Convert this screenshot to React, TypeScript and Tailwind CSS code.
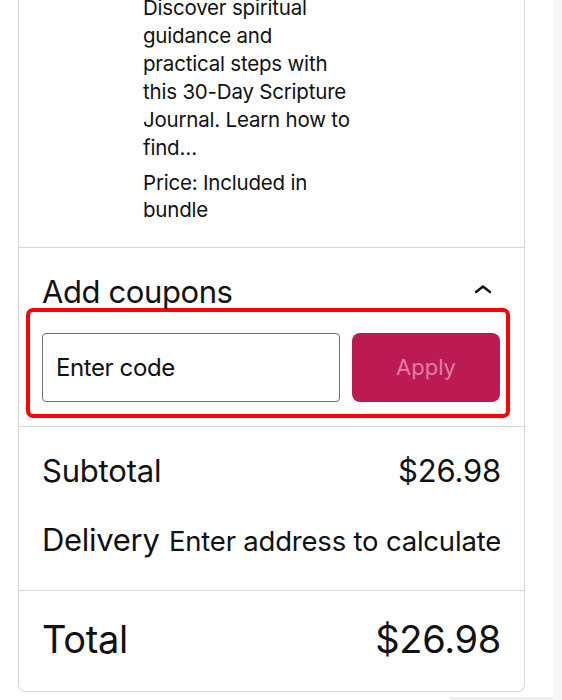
import React from 'react';

const font = { fontFamily: 'Inter, "Noto Sans", sans-serif' };

const descLines = [
  'Discover spiritual',
  'guidance and',
  'practical steps with',
  'this 30-Day Scripture',
  'Journal. Learn how to',
  'find…',
];

const App: React.FC = () => {
  return (
    <div className="w-[562px] h-[700px] bg-white overflow-hidden flex text-[#111]" style={font}>
      <div className="w-[553px] shrink-0">
        {/* Cart summary card */}
        <div className="ml-[18px] w-[507px] -mt-[6px] border-x border-b border-[#d6d6d6] rounded-b-[7px]">
          {/* Item description */}
          <div className="pl-[124px] pr-6 pb-[24px] border-b border-[#d6d6d6]">
            <p className="text-[20.5px] leading-[28px] whitespace-nowrap tracking-[-0.2px]">
              {descLines.map((l, i) => (
                <span key={i} className="block">{l}</span>
              ))}
            </p>
            <p className="mt-[7px] text-[20.5px] leading-[27px] whitespace-nowrap tracking-[-0.2px]">
              <span className="block">Price: Included in</span>
              <span className="block">bundle</span>
            </p>
          </div>

          {/* Coupons */}
          <div className="pl-[7px] pr-[14px] pt-[26px] pb-[8px] border-b border-[#d6d6d6]">
            <div className="flex items-center justify-between pl-[16px] pr-[18px] h-[36px]">
              <span className="text-[31px] leading-[36px] tracking-[-0.4px]">Add coupons</span>
              <svg width="18" height="10" viewBox="0 0 18 10" fill="none" className="-mt-[6px]">
                <path d="M2 8 L9 2.5 L16 8" stroke="#111" strokeWidth="2.4" strokeLinecap="round" strokeLinejoin="round" />
              </svg>
            </div>
            <div className="-mt-[2px] border-[4px] border-[#ff0000] rounded-[7px] pl-[12px] pr-[6px] pt-[21px] pb-[12px] flex gap-[12px]">
              <div className="w-[298px] h-[69px] border border-[#707070] rounded-[4px] flex items-center px-[13px]">
                <span className="text-[24px] tracking-[-0.4px]">Enter code</span>
              </div>
              <button className="w-[148px] h-[69px] bg-[#bc1a53] rounded-[8px] text-[22px] text-[#e07ea6]">Apply</button>
            </div>
          </div>

          {/* Subtotal & delivery */}
          <div className="px-[23px] pt-[26px] pb-[31px] border-b border-[#d6d6d6] flex flex-col gap-[33px]">
            <div className="flex justify-between items-baseline text-[31px] leading-[36px] tracking-[-0.2px]">
              <span>Subtotal</span>
              <span>$26.98</span>
            </div>
            <div className="flex justify-between items-baseline leading-[36px]">
              <span className="text-[31px] tracking-[-0.3px]">Delivery</span>
              <span className="text-[27.5px] tracking-[-0.2px]">Enter address to calculate</span>
            </div>
          </div>

          {/* Total */}
          <div className="px-[23px] pt-[26px] pb-[30px] flex justify-between items-baseline text-[38px] leading-[44px] tracking-[-0.3px]">
            <span>Total</span>
            <span>$26.98</span>
          </div>
        </div>
        <div className="mt-[5px] ml-[450px] h-[4px] bg-[#eeeeee]" />
      </div>
      <div className="flex-1 bg-[#f6f6f6]" />
    </div>
  );
};

export default App;
